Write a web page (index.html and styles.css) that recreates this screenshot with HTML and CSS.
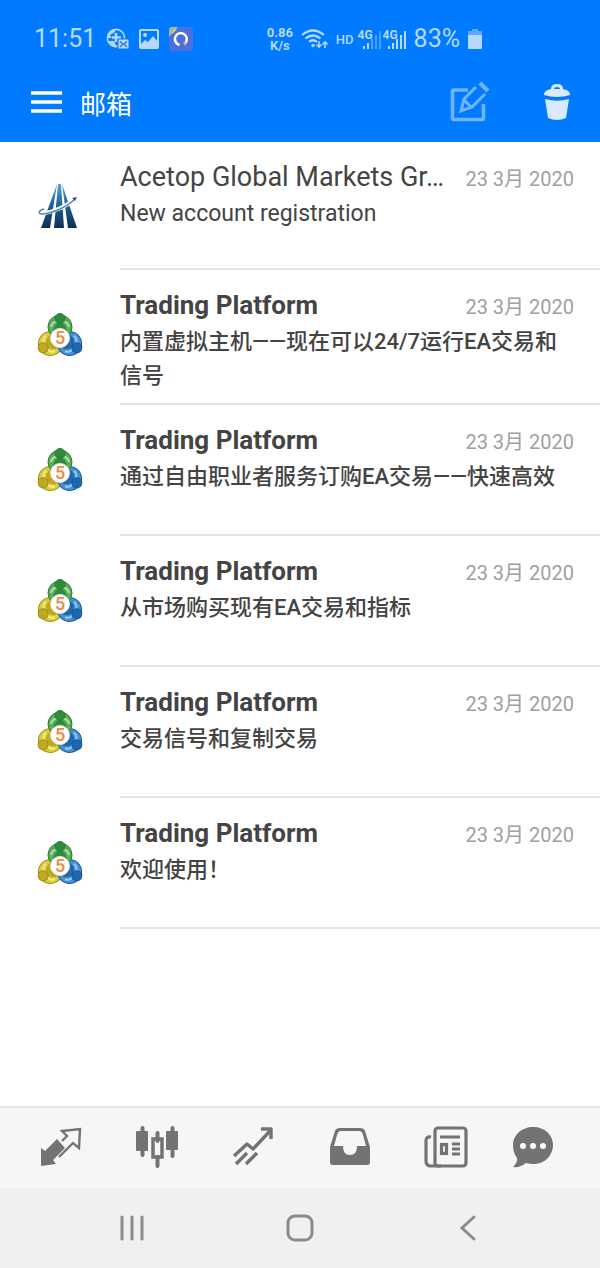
FILE: index.html
```html
<!DOCTYPE html>
<html lang="zh-CN">
<head>
<meta charset="utf-8">
<meta name="viewport" content="width=device-width, initial-scale=1">
<title>邮箱</title>
<link rel="stylesheet" href="styles.css">
</head>
<body>
<svg class="defs" width="0" height="0" aria-hidden="true">
  <defs>
    <linearGradient id="navy" x1="0" y1="0" x2="0" y2="1"><stop offset="0" stop-color="#5aa5d2"/><stop offset=".5" stop-color="#1d5f99"/><stop offset="1" stop-color="#0b2f56"/></linearGradient>
    <symbol id="platform" viewBox="0 0 48 48">
      <g fill="#d9cf3a" stroke="#a08f1c" color="#c0a921" transform="rotate(-120 24 26)">
        <circle cx="24" cy="15" r="12"/>
        <path d="M15 15q1-6 9-6t9 6" fill="none" stroke="#f1eb8e" stroke-width="2"/>
        <path d="M16 23q0-12 8-12t8 12z" fill="currentColor" stroke="none"/>
        <circle cx="24" cy="6.500" r="5" fill="currentColor"/>
      </g>
      <g fill="#4391d2" stroke="#1a5795" color="#1d68b0" transform="rotate(120 24 26)">
        <circle cx="24" cy="15" r="12"/>
        <path d="M15 15q1-6 9-6t9 6" fill="none" stroke="#9ccbee" stroke-width="2"/>
        <path d="M16 23q0-12 8-12t8 12z" fill="currentColor" stroke="none"/>
        <circle cx="24" cy="6.500" r="5" fill="currentColor"/>
      </g>
      <g fill="#5aae58" stroke="#2c7a35" color="#2f8c3d">
        <circle cx="24" cy="15" r="12"/>
        <path d="M15 15q1-6 9-6t9 6" fill="none" stroke="#b3dcab" stroke-width="2"/>
        <path d="M17 23q0-12 7-12t7 12z" fill="currentColor" stroke="none"/>
        <circle cx="24" cy="6.500" r="5" fill="currentColor"/>
      </g>
      <circle cx="24" cy="26" r="9.500" fill="#fff" stroke="#e6e6e0"/>
      <text x="24" y="32" text-anchor="middle" class="badge-digit">5</text>
    </symbol>
  </defs>
</svg>
<div class="app">
  <header class="header">
    <div class="status">
      <div class="status-group status-left">
        <span class="clock">11:51</span>
        <svg width="23" height="22" viewBox="0 0 23 22"><circle cx="10" cy="10" r="8.600" fill="none" stroke="currentColor" stroke-width="1.600"/><path d="M9 1C4 2 1 6 1 10l5 0-2-3 5-3zM3 13l5 0 3 6C7 19 4 17 3 13z" fill="currentColor"/><path d="M10 5v9M6 9.500h9" stroke="currentColor" stroke-width="2.600"/><path d="M12 11h11v10H12z" fill="#b5d8fb" stroke="#007aff"/><path d="M14 13.500l3.500 3 3.500-3M14 19l2.500-2.500M21 19l-2.500-2.500" fill="none" stroke="#1974d8" stroke-width="1.200"/></svg>
        <svg width="20" height="20" viewBox="0 0 20 20"><rect x="1" y="1" width="18" height="18" rx="1" fill="none" stroke="currentColor" stroke-width="2"/><path d="M2 15l4-4 3 2 5-6 4 5v6H2z" fill="currentColor"/><circle cx="6" cy="6" r="2" fill="currentColor"/></svg>
        <svg width="24" height="24" viewBox="0 0 24 24"><rect width="24" height="24" rx="3" fill="#4b70dc"/><path d="M0 10V3a3 3 0 0 1 3-3h6z" fill="#9fb99c"/><path d="M3 6l4-4" stroke="#e7c86d" stroke-width="2"/><path d="M10.500 18a6 6 0 1 1 6-2" fill="none" stroke="#fff" stroke-width="2.400"/><path d="M14 15l4 1-2 3z" fill="#d8b46b"/></svg>
      </div>
      <div class="status-group status-right">
        <span class="speed"><span>0.86</span><span>K/s</span></span>
        <svg width="27" height="21" viewBox="0 0 27 21" fill="none" stroke="currentColor" stroke-width="2.200"><path d="M1 6Q12-3 23 6M4.500 9.500Q12 3.500 19.500 9.500M8 13q4-3.500 8 0"/><circle cx="12" cy="16.500" r="1.800" fill="currentColor" stroke="none"/><path d="M18 12v6M15.500 15.500L18 18l2.500-2.500M24 19v-6M21.500 15.500L24 13l2.500 2.500" stroke-width="1.600"/></svg>
        <span class="hd">HD</span>
        <span class="signal-pair">
          <span class="signal"><span>4G</span><svg width="23" height="20" viewBox="0 0 23 20" fill="currentColor"><path d="M5 17h2v3H5zM9 14h2v6H9z"/><path opacity=".4" d="M13 10h2v10h-2zM17 6h2v14h-2zM21 2h2v18h-2z"/></svg></span>
          <span class="signal"><span>4G</span><svg width="23" height="20" viewBox="0 0 23 20" fill="currentColor"><path d="M5 17h2v3H5zM9 14h2v6H9zM13 10h2v10h-2zM17 6h2v14h-2zM21 2h2v18h-2z"/></svg></span>
        </span>
        <span class="percent">83%</span>
        <svg width="14" height="20" viewBox="0 0 14 20" fill="currentColor"><path opacity=".5" d="M4 0h6v2h4v5H0V2h4z"/><path d="M0 6h14v13a1 1 0 0 1-1 1H1a1 1 0 0 1-1-1z"/></svg>
      </div>
    </div>
    <div class="toolbar">
      <button class="icon-button" aria-label="菜单"><svg width="32" height="22" viewBox="0 0 32 22"><path d="M0 2h31M0 11h31M0 20h31" stroke="currentColor" stroke-width="3.600"/></svg></button>
      <h1 class="page-title">邮箱</h1>
      <button class="icon-button compose" aria-label="写邮件"><svg width="40" height="42" viewBox="0 0 40 42" fill="none" stroke="currentColor" stroke-width="3.600"><path d="M18 9H4q-1.500 0-1.500 1.500V37q0 1.500 1.500 1.500h28q1.500 0 1.500-1.500V23"/><path d="M26 6L14 18l-3 12 11-4 13-13M14 19l7 7" stroke-width="3"/><path d="M30 2l8 8" stroke-width="4"/></svg></button>
      <button class="icon-button trash" aria-label="删除"><svg width="26" height="38" viewBox="0 0 26 38" fill="currentColor"><path fill-rule="evenodd" d="M7 6q0-5 6-5t6 5c5 1 7 3 7 6q-13 4-26 0c0-3 2-5 7-6zm3 0h6q0-2-3-2t-3 2z"/><path d="M1 16q12 3.500 24 0l-3 19q-9 4-18 0z"/></svg></button>
    </div>
  </header>

  <main class="mail-list">
    <article class="mail read">
      <svg class="avatar" width="48" height="48" viewBox="0 0 48 48"><path d="M21 2L5 46h9zM22 2l-4 44h10L25 2zM26 2l6 44h9z" fill="url(#navy)"/><path d="M40 16C29 26 13 31 7 31c-6 0-3-4 2-5" fill="none" stroke="#fff" stroke-width="4"/><path d="M39 17C29 27 12 32 6 32c-5 0-3-4 2-5" fill="none" stroke="#5d87b0" stroke-width="1.500"/><path d="M36 16l5-1-2 4z" fill="#39479b"/></svg>
      <div class="mail-body">
        <div class="mail-head"><h2 class="sender">Acetop Global Markets Gr…</h2><time class="date">23 3月 2020</time></div>
        <p class="subject">New account registration</p>
      </div>
    </article>
    <article class="mail">
      <svg class="avatar" width="48" height="48"><use href="#platform"/></svg>
      <div class="mail-body">
        <div class="mail-head"><h2 class="sender">Trading Platform</h2><time class="date">23 3月 2020</time></div>
        <p class="subject">内置虚拟主机——现在可以24/7运行EA交易和信号</p>
      </div>
    </article>
    <article class="mail">
      <svg class="avatar" width="48" height="48"><use href="#platform"/></svg>
      <div class="mail-body">
        <div class="mail-head"><h2 class="sender">Trading Platform</h2><time class="date">23 3月 2020</time></div>
        <p class="subject">通过自由职业者服务订购EA交易——快速高效</p>
      </div>
    </article>
    <article class="mail">
      <svg class="avatar" width="48" height="48"><use href="#platform"/></svg>
      <div class="mail-body">
        <div class="mail-head"><h2 class="sender">Trading Platform</h2><time class="date">23 3月 2020</time></div>
        <p class="subject">从市场购买现有EA交易和指标</p>
      </div>
    </article>
    <article class="mail">
      <svg class="avatar" width="48" height="48"><use href="#platform"/></svg>
      <div class="mail-body">
        <div class="mail-head"><h2 class="sender">Trading Platform</h2><time class="date">23 3月 2020</time></div>
        <p class="subject">交易信号和复制交易</p>
      </div>
    </article>
    <article class="mail">
      <svg class="avatar" width="48" height="48"><use href="#platform"/></svg>
      <div class="mail-body">
        <div class="mail-head"><h2 class="sender">Trading Platform</h2><time class="date">23 3月 2020</time></div>
        <p class="subject">欢迎使用！</p>
      </div>
    </article>
  </main>

  <nav class="tabs">
    <button class="tab" aria-label="报价"><svg width="42" height="42" viewBox="0 0 42 42"><path d="M1 22l4 3L17 13l8 9-12 12 3 4-15 2z" fill="currentColor"/><path d="M22 15l5-5-5-5 18-2-1 19-6-5-14 14" fill="none" stroke="currentColor" stroke-width="2.400"/></svg></button>
    <button class="tab" aria-label="图表"><svg width="42" height="42" viewBox="0 0 42 42"><path d="M6.500 2v27M36.500 2v28M21.500 7v8M21.500 31v9" stroke="currentColor" stroke-width="4" stroke-linecap="round"/><rect y="5" width="12" height="20" rx="1" fill="currentColor"/><rect x="30" y="5" width="12" height="19" rx="1" fill="currentColor"/><rect x="17" y="13" width="9" height="18" fill="none" stroke="currentColor" stroke-width="3.500"/></svg></button>
    <button class="tab" aria-label="交易"><svg width="42" height="42" viewBox="0 0 42 42" fill="none" stroke="currentColor" stroke-width="3.400"><path d="M2 30l13-12 6 5L38 5M29 3h10v10" stroke-linejoin="round"/><path d="M4 38l11-11M14 38l11-11"/></svg></button>
    <button class="tab" aria-label="邮箱"><svg width="42" height="42" viewBox="0 0 42 42"><path fill-rule="evenodd" d="M11 2h20q4 0 5 3l5 16v15q0 3-3 3H4q-3 0-3-3V21L6 5q1-3 5-3zm1 3Q9 5 8 9L5 20h9q0 9 7 9t7-9h9L34 9q-1-4-4-4z" fill="currentColor"/></svg></button>
    <button class="tab" aria-label="新闻"><svg width="44" height="42" viewBox="0 0 44 42" fill="none" stroke="currentColor" stroke-width="3.200"><rect x="11" y="2" width="31" height="38" rx="3"/><path d="M7 11q-5-1-5 4v20q0 5 5 5h10M16 11h20M28 18h8M28 23h8M28 28h8"/><rect x="17.500" y="18.500" width="5" height="9"/></svg></button>
    <button class="tab" aria-label="聊天"><svg width="42" height="42" viewBox="0 0 42 42"><path d="M21 1c12 0 20 8 20 18S33 38 22 38q-5 0-8-1-6 5-13 4 5-5 4-9-4-5-4-13C1 9 10 1 21 1z" fill="currentColor"/><g fill="#fff"><circle cx="11" cy="20" r="3"/><circle cx="21" cy="20" r="3"/><circle cx="31" cy="20" r="3"/></g></svg></button>
  </nav>
  <nav class="system-nav">
    <button class="system-button" aria-label="最近任务"><svg width="28" height="28" viewBox="0 0 28 28"><path d="M4 3v22M14 3v22M24 3v22" stroke="currentColor" stroke-width="3" stroke-linecap="round"/></svg></button>
    <button class="system-button" aria-label="主屏幕"><svg width="28" height="28" viewBox="0 0 28 28"><rect x="2" y="2" width="24" height="24" rx="7" fill="none" stroke="currentColor" stroke-width="3"/></svg></button>
    <button class="system-button" aria-label="返回"><svg width="28" height="28" viewBox="0 0 28 28"><path d="M20 3L8 14l12 11" fill="none" stroke="currentColor" stroke-width="3" stroke-linecap="round"/></svg></button>
  </nav>
</div>
</body>
</html>
```

FILE: styles.css
```css
* { box-sizing: border-box; }

body {
  margin: 0;
  background: #fff;
  color: #444;
  font-family: Roboto, "Noto Sans CJK SC", sans-serif;
}

h1, h2, p { margin: 0; }

svg { display: block; flex: none; }

.defs { position: absolute; }

button {
  padding: 0;
  border: 0;
  background: none;
  color: inherit;
  font: inherit;
  cursor: pointer;
}

.app {
  display: flex;
  flex-direction: column;
  min-height: 100vh;
}

.header {
  background: #007aff;
  color: #fff;
}

.status {
  display: flex;
  align-items: center;
  height: 64px;
  padding: 14px 118px 0 34px;
  color: #b5d8fb;
}

.status-group {
  display: flex;
  align-items: center;
}

.status-left { gap: 10px; }

.status-right {
  gap: 8px;
  margin-left: auto;
}

.clock,
.percent {
  font-size: 25px;
  line-height: 28px;
}

.speed {
  display: grid;
  justify-items: center;
  font-size: 13px;
  font-weight: 700;
  line-height: 13px;
}

.hd {
  font-size: 13px;
  font-weight: 500;
}

.signal-pair {
  display: flex;
  gap: 2px;
  margin-left: -4px;
}

.signal {
  display: grid;
  font-size: 12px;
  font-weight: 700;
  line-height: 12px;
}

.signal > * { grid-area: 1 / 1; }

.toolbar {
  display: flex;
  align-items: center;
  height: 78px;
  padding: 0 30px 2px 31px;
}

.page-title {
  flex: 1;
  margin-left: 17px;
  font-size: 26px;
  font-weight: 400;
}

.compose {
  margin-right: 54px;
  color: #70b4ff;
}

.trash { color: #d9eaff; }

.mail-list { flex: 1; }

.mail {
  display: flex;
  gap: 36px;
  min-height: 131px;
  padding-left: 36px;
}

.mail.read { min-height: 128px; }

.avatar { margin-top: 42px; }

.mail.read .avatar { margin-top: 40px; }

.mail-body {
  flex: 1;
  min-width: 0;
  padding: 17px 26px 10px 0;
  border-bottom: 2px solid #e5e5e5;
}

.mail-head {
  display: flex;
  align-items: flex-end;
  justify-content: space-between;
  gap: 16px;
}

.sender {
  overflow: hidden;
  font-size: 26px;
  font-weight: 700;
  line-height: 36px;
  text-overflow: ellipsis;
  white-space: nowrap;
}

.date {
  flex: none;
  color: #a0a0a0;
  font-size: 20px;
  line-height: 32px;
}

.subject {
  margin-top: 2px;
  font-size: 22px;
  font-weight: 500;
  line-height: 34px;
}

.read .sender,
.read .subject { font-weight: 400; }

.read .sender { font-size: 27px; }

.read .subject { font-size: 23px; }

.badge-digit {
  fill: #ec8b45;
  font-size: 18px;
  font-weight: 500;
}

.tabs {
  display: grid;
  grid-template-columns: repeat(5, 96fr) 78fr;
  align-items: center;
  height: 82px;
  padding: 0 28px 3px 13px;
  border-top: 2px solid #e5e5e5;
  background: #f6f6f6;
  color: #737373;
}

.tab,
.system-button {
  display: grid;
  place-items: center;
}

.system-nav {
  display: grid;
  grid-template-columns: repeat(3, 1fr);
  align-items: center;
  height: 80px;
  padding: 0 48px;
  background: #f0f0f0;
  color: #8b8b8b;
}
```
